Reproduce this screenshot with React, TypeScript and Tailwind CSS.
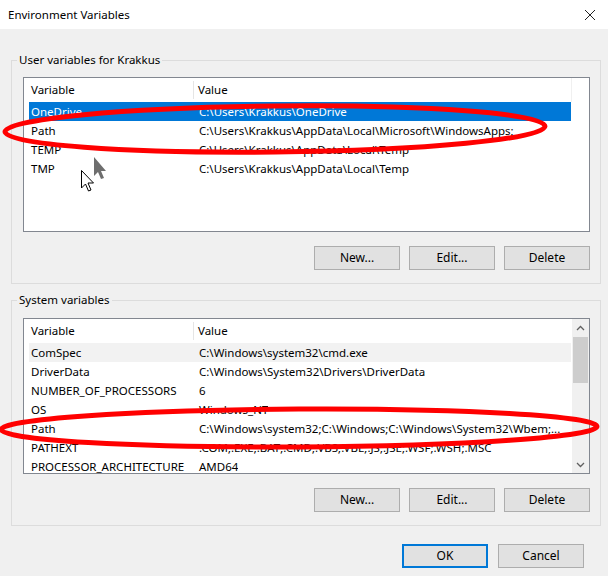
import React from "react";

const userVars = [
  { name: "OneDrive", value: "C:\\Users\\Krakkus\\OneDrive", selected: true },
  { name: "Path", value: "C:\\Users\\Krakkus\\AppData\\Local\\Microsoft\\WindowsApps;" },
  { name: "TEMP", value: "C:\\Users\\Krakkus\\AppData\\Local\\Temp" },
  { name: "TMP", value: "C:\\Users\\Krakkus\\AppData\\Local\\Temp" },
];

const systemVars = [
  { name: "ComSpec", value: "C:\\Windows\\system32\\cmd.exe", hover: true },
  { name: "DriverData", value: "C:\\Windows\\System32\\Drivers\\DriverData" },
  { name: "NUMBER_OF_PROCESSORS", value: "6" },
  { name: "OS", value: "Windows_NT" },
  { name: "Path", value: "C:\\Windows\\system32;C:\\Windows;C:\\Windows\\System32\\Wbem;..." },
  { name: "PATHEXT", value: ".COM;.EXE;.BAT;.CMD;.VBS;.VBE;.JS;.JSE;.WSF;.WSH;.MSC" },
  { name: "PROCESSOR_ARCHITECTURE", value: "AMD64" },
];

function WinButton({ label, primary }: { label: string; primary?: boolean }) {
  return (
    <button
      type="button"
      className={
        "w-[86px] h-[24px] bg-[#e1e1e1] text-black text-[12px] leading-none " +
        (primary ? "border-2 border-[#0078d7]" : "border border-[#adadad]")
      }
    >
      {label}
    </button>
  );
}

function Header() {
  return (
    <div className="flex h-[24px] items-center">
      <div className="w-[165px] pl-[2px] h-[18px] flex items-center border-r border-[#e5e5e5]">Variable</div>
      <div className="pl-[4px]">Value</div>
    </div>
  );
}

function Row({ name, value, selected, hover }: { name: string; value: string; selected?: boolean; hover?: boolean }) {
  return (
    <div
      className={
        "flex h-[19px] items-center whitespace-nowrap " +
        (selected ? "bg-[#0078d7] text-white" : hover ? "bg-[#f2f2f2]" : "")
      }
    >
      <div className="w-[165px] pl-[2px] shrink-0">{name}</div>
      <div className="pl-[5px] overflow-hidden">{value}</div>
    </div>
  );
}

function Chevron({ up }: { up?: boolean }) {
  return (
    <svg width="9" height="6" viewBox="0 0 9 6">
      <path
        d={up ? "M1 5 L4.5 1.5 L8 5" : "M1 1 L4.5 4.5 L8 1"}
        fill="none"
        stroke="#606060"
        strokeWidth="1.3"
      />
    </svg>
  );
}

export default function App() {
  return (
    <div
      className="relative w-[608px] h-[576px] bg-[#f0f0f0] text-[11.5px] text-black overflow-hidden"
      style={{ fontFamily: '"Noto Sans", "Liberation Sans", sans-serif' }}
    >
      {/* title bar */}
      <div className="h-[29px] bg-white flex items-center justify-between pl-[8px] pr-[12px]">
        <span>Environment Variables</span>
        <svg width="12" height="12" viewBox="0 0 12 12">
          <path d="M1 1 L11 11 M11 1 L1 11" stroke="#222" strokeWidth="1" />
        </svg>
      </div>

      <div className="pl-[11px] pt-[23px]">
        {/* user variables */}
        <fieldset className="w-[590px] border border-[#dcdcdc] pl-[11px] pb-[13px]">
          <legend className="-ml-[6px] px-[2px] h-[16px] leading-[16px]">User variables for Krakkus</legend>
          <div className="mt-[9px] w-[567px] h-[155px] bg-white border border-[#828790] pl-[5px] flex">
            <div className="w-[542px]">
              <Header />
              {userVars.map((v) => (
                <Row key={v.name} {...v} />
              ))}
            </div>
            <div className="flex-1 border-l border-[#f0f0f0] h-[24px]" />
          </div>
          <div className="mt-[14px] w-[567px] flex justify-end gap-[9px]">
            <WinButton label="New..." />
            <WinButton label="Edit..." />
            <WinButton label="Delete" />
          </div>
        </fieldset>

        {/* system variables */}
        <fieldset className="mt-[8px] w-[590px] border border-[#dcdcdc] pl-[11px] pb-[13px]">
          <legend className="-ml-[6px] px-[2px] h-[16px] leading-[16px]">System variables</legend>
          <div className="mt-[10px] w-[567px] h-[156px] bg-white border border-[#828790] flex overflow-hidden">
            <div className="flex-1 pl-[5px] pr-[1px] overflow-hidden">
              <Header />
              {systemVars.map((v) => (
                <Row key={v.name + v.value} {...v} />
              ))}
            </div>
            <div className="w-[17px] bg-[#f0f0f0] flex flex-col items-center">
              <div className="h-[17px] flex items-center justify-center">
                <Chevron up />
              </div>
              <div className="w-[15px] h-[46px] bg-[#cdcdcd] mt-[1px]" />
              <div className="flex-1" />
              <div className="h-[17px] flex items-center justify-center">
                <Chevron />
              </div>
            </div>
          </div>
          <div className="mt-[14px] w-[567px] flex justify-end gap-[9px]">
            <WinButton label="New..." />
            <WinButton label="Edit..." />
            <WinButton label="Delete" />
          </div>
        </fieldset>
      </div>

      {/* dialog buttons */}
      <div className="mt-[18px] flex justify-end gap-[10px] pr-[24px]">
        <WinButton label="OK" primary />
        <WinButton label="Cancel" />
      </div>

      {/* annotations drawn over the screenshot */}
      <svg className="absolute inset-0 pointer-events-none" width="608" height="576" viewBox="0 0 608 576">
        <ellipse cx="275" cy="129" rx="270" ry="23" fill="none" stroke="#ff0000" strokeWidth="5" transform="rotate(-0.6 275 129)" />
        <ellipse cx="299" cy="428" rx="298" ry="19" fill="none" stroke="#ff0000" strokeWidth="5" transform="rotate(-0.3 299 428)" />
        {/* ghost cursor */}
        <path d="M94 157 L94 176 L98 172 L101 179 L104 178 L101 171 L106 171 Z" fill="#555" opacity="0.85" />
        {/* mouse pointer */}
        <path d="M81.5 170.5 L81.5 188 L85.5 184 L88.5 191 L91 190 L88 183 L93.5 183 Z" fill="#fff" stroke="#000" strokeWidth="1" strokeLinejoin="round" />
      </svg>
    </div>
  );
}
